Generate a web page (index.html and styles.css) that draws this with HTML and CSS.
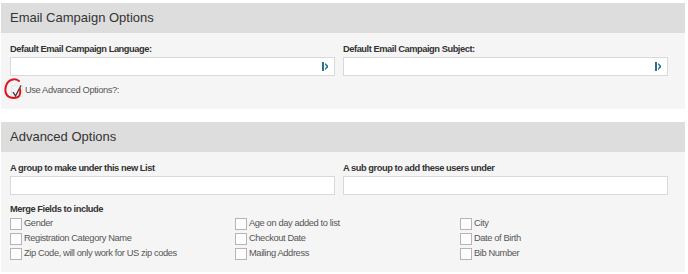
FILE: index.html
```html
<!DOCTYPE html>
<html lang="en">
<head>
  <meta charset="UTF-8" />
  <title>Email Campaign Options</title>
  <link rel="stylesheet" href="styles.css">
</head>
<body>

  <!-- Email campaign options -->
  <div class="panel">
    <div class="panel-heading">Email Campaign Options</div>
    <div class="panel-body">
      <div class="row">
        <div class="field">
          <label class="field-label">Default Email Campaign Language:</label>
          <div class="input">
            <svg class="input-icon" width="6" height="9" viewBox="0 0 6 9">
              <rect x="0" y="0" width="2" height="9" fill="#2b6f8c"/>
              <path d="M3 1 L6 3.5 L6 5.5 L3 8 L3 6.5 L4.6 4.5 L3 2.5 Z" fill="#2b6f8c"/>
            </svg>
          </div>
        </div>
        <div class="field">
          <label class="field-label">Default Email Campaign Subject:</label>
          <div class="input">
            <svg class="input-icon" width="6" height="9" viewBox="0 0 6 9">
              <rect x="0" y="0" width="2" height="9" fill="#2b6f8c"/>
              <path d="M3 1 L6 3.5 L6 5.5 L3 8 L3 6.5 L4.6 4.5 L3 2.5 Z" fill="#2b6f8c"/>
            </svg>
          </div>
        </div>
      </div>

      <div class="check-line advanced-toggle">
        <span class="checkbox checked">
          <svg width="10" height="12" viewBox="0 0 10 12">
            <path d="M1 7 L3.5 11 L9 0.5" fill="none" stroke="#3a3a3a" stroke-width="1.3"/>
          </svg>
        </span>
        Use Advanced Options?:
        <!-- red annotation ring -->
        <svg class="annotation" width="20" height="22" viewBox="0 0 20 22">
          <path d="M15 3 C11 0, 4 1, 2 8 C0 15, 3 20, 10 20 C15 20, 17 17, 16 11" fill="none" stroke="#e0141e" stroke-width="2" stroke-linecap="round"/>
        </svg>
      </div>
    </div>
  </div>

  <!-- Advanced options -->
  <div class="panel">
    <div class="panel-heading">Advanced Options</div>
    <div class="panel-body">
      <div class="row">
        <div class="field">
          <label class="field-label">A group to make under this new List</label>
          <div class="input"></div>
        </div>
        <div class="field">
          <label class="field-label">A sub group to add these users under</label>
          <div class="input"></div>
        </div>
      </div>

      <div class="merge-title">Merge Fields to include</div>
      <div class="merge-grid">
        <div class="check-line"><span class="checkbox"></span>Gender</div>
        <div class="check-line"><span class="checkbox"></span>Age on day added to list</div>
        <div class="check-line"><span class="checkbox"></span>City</div>
        <div class="check-line"><span class="checkbox"></span>Registration Category Name</div>
        <div class="check-line"><span class="checkbox"></span>Checkout Date</div>
        <div class="check-line"><span class="checkbox"></span>Date of Birth</div>
        <div class="check-line"><span class="checkbox"></span>Zip Code, will only work for US zip codes</div>
        <div class="check-line"><span class="checkbox"></span>Mailing Address</div>
        <div class="check-line"><span class="checkbox"></span>Bib Number</div>
      </div>
    </div>
  </div>

</body>
</html>
```

FILE: styles.css
```css
body {
  font-family: "Liberation Sans", Arial, sans-serif;
  background-color: #ffffff;
  margin: 0;
  padding: 3px 3px 0 1px;
  color: #555;
}

.panel {
  margin-bottom: 13px;
}

.panel-heading {
  background-color: #dddddd;
  color: #333;
  font-size: 13px;
  height: 30px;
  line-height: 30px;
  padding-left: 9px;
}

.panel-body {
  background-color: #f5f5f5;
  padding: 9px 18px 11px 9px;
}

.row {
  display: grid;
  grid-template-columns: 325px 325px;
  column-gap: 8px;
}

.field-label {
  display: block;
  font-size: 9.3px;
  letter-spacing: -0.45px;
  font-weight: bold;
  color: #333;
  line-height: 14px;
  margin-bottom: 1px;
}

.input {
  position: relative;
  height: 17px;
  background-color: #fff;
  border: 1px solid #d9d9d9;
}

/* small icon sitting inside the field */
.input-icon {
  position: absolute;
  right: 6px;
  top: 4px;
}

.check-line {
  display: flex;
  align-items: center;
  font-size: 9.3px;
  letter-spacing: -0.38px;
  line-height: 15px;
  color: #555;
}

.checkbox {
  display: inline-block;
  width: 10px;
  height: 10px;
  border: 1px solid #b5b5b5;
  background-color: #fdfdfd;
  margin-right: 2px;
  flex-shrink: 0;
}

.checkbox.checked {
  border-color: #e6e6e6;
  background-color: transparent;
  margin-left: 1px;
  margin-right: 2px;
}

.checkbox svg {
  display: block;
  margin-top: -1px;
}

.advanced-toggle {
  position: relative;
  margin-top: 7px;
}

.annotation {
  position: absolute;
  left: -6px;
  top: -5px;
}

.merge-title {
  font-size: 9.3px;
  letter-spacing: -0.45px;
  font-weight: bold;
  color: #333;
  line-height: 14px;
  margin-top: 7px;
}

.merge-grid {
  display: grid;
  grid-template-columns: 225px 225px 225px;
}
```
